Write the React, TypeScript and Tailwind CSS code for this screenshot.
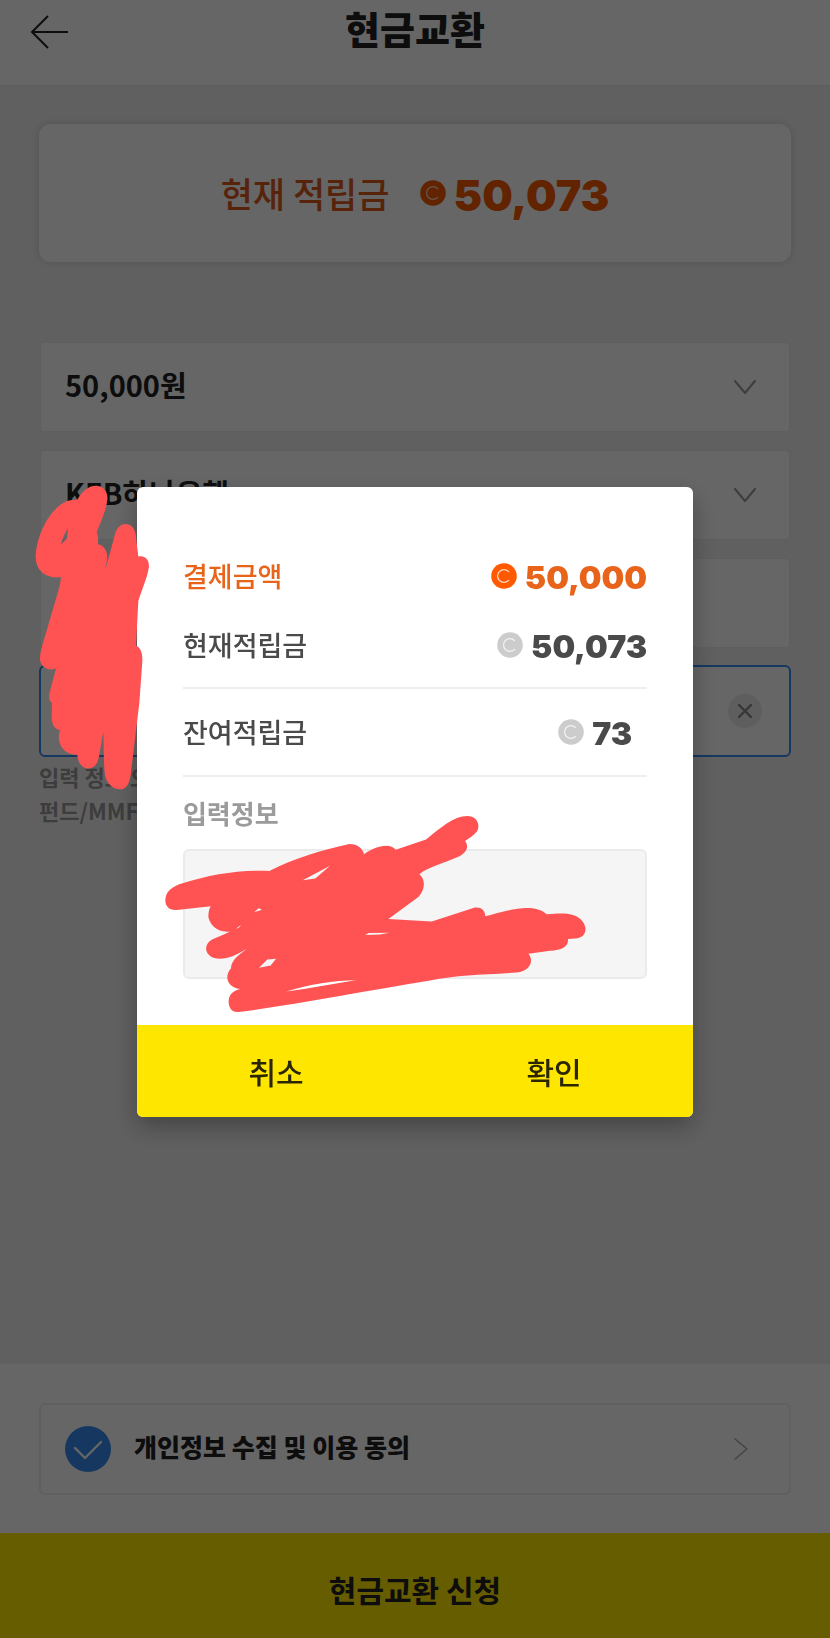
/**
 * Cash exchange screen (현금교환) with the confirm dialog open
 */

import React from 'react';

const AMOUNTS = ['50,000원', '30,000원', '10,000원'];
const BANKS = ['KEB하나은행', '국민은행', '신한은행'];

function Coin({ className }: { className: string }) {
  return (
    <svg viewBox="0 0 26 26" className={`w-[26px] h-[26px] shrink-0 ${className}`} aria-hidden="true">
      <circle cx="13" cy="13" r="12.8" fill="currentColor" />
      <path
        d="M17.6 8.6a6.4 6.4 0 1 0 0 8.8"
        fill="none"
        className="stroke-white"
        strokeOpacity="0.75"
        strokeWidth="1.3"
        strokeLinecap="round"
      />
    </svg>
  );
}

/** Marker strokes that hide the personal data */
function Redaction() {
  return (
    <svg
      viewBox="137 488 556 628"
      preserveAspectRatio="none"
      className="absolute inset-0 w-full h-full overflow-visible pointer-events-none fill-[#ff5252]"
      aria-hidden="true"
    >
      <g transform="translate(0 470) scale(0.33333)">
        <path
          fillRule="evenodd"
          d="M290 50C312 52 325 70 322 92C318 130 300 160 290 190C295 200 295 210 294 225C312 228 322 245 322 265L316 302L345 195C352 174 363 165 377 165C392 165 403 175 407 195L415 262C438 258 450 275 446 298C442 325 424 365 415 395L408 528C422 535 428 550 427 575L418 700L392 915C388 943 378 958 360 958C338 958 320 940 315 915C311 890 312 840 310 785L297 860C293 882 282 896 265 896C247 896 233 878 232 855C205 856 180 838 177 810C176 798 177 788 181 780C165 780 155 765 155 740L156 700C147 694 146 680 150 665L168 597C145 605 122 593 120 570C120 560 122 545 125 535L172 375C177 358 181 345 183 323C145 330 108 310 107 265C109 190 160 100 215 93L232 92C245 68 265 49 290 50ZM204 178C195 190 187 210 183 226C190 219 196 212 201 208Z"
        />
      </g>
      <g transform="translate(130 780) scale(0.33333)">
        <path
          fillRule="evenodd"
          d="M106 360C106 335 125 318 160 308C240 283 330 268 418 272C490 235 580 208 655 192C680 190 698 205 702 222C730 200 780 185 797 209L888 178C930 145 970 108 1012 108C1040 108 1053 135 1040 155C1030 168 1016 174 1005 183C1018 200 1010 217 985 230C940 250 895 260 868 282C885 295 888 325 865 350L775 416L905 423L1030 383C1050 378 1065 388 1066 408C1130 390 1210 366 1250 402C1300 397 1330 398 1350 415C1378 440 1368 475 1335 474L1314 476C1315 500 1295 508 1260 511L1195 520C1213 540 1200 572 1160 576C1060 583 980 583 900 600C700 632 500 672 325 694C298 697 290 665 300 645C306 634 316 629 330 625C300 622 288 600 293 582C295 573 299 568 303 564C303 540 325 525 350 505C310 530 280 540 250 532C222 520 222 492 245 478C265 468 285 462 300 453C265 458 240 435 235 410C235 395 238 385 242 378L140 389C118 391 106 378 106 360ZM518 300L600 257L556 295ZM372 396L386 384L396 388ZM318 445L334 432L326 442ZM387 562L412 537L438 535L422 555ZM705 464L716 458L778 457L750 462ZM468 633C540 610 610 600 680 598C610 610 540 622 468 633Z"
        />
      </g>
    </svg>
  );
}

function SelectField({ label, options }: { label: string; options: string[] }) {
  return (
    <div className="relative h-[92px] rounded-md border-2 border-[#eeeeee] bg-white">
      <select
        aria-label={label}
        className="w-full h-full appearance-none bg-transparent pl-6 pr-20 pb-1 text-[29px] font-bold text-[#222222] outline-none"
      >
        {options.map((o) => (
          <option key={o}>{o}</option>
        ))}
      </select>
      <svg
        viewBox="0 0 22 14"
        className="absolute right-[33px] top-[37px] w-[22px] h-[14px] fill-none stroke-[#999999] pointer-events-none"
        aria-hidden="true"
      >
        <path d="M1 1l10 12L21 1" strokeWidth="2" strokeLinecap="round" strokeLinejoin="round" />
      </svg>
    </div>
  );
}

interface AmountRowProps {
  label: string;
  value: string;
  rowClass?: string;
  coinClass?: string;
}

function AmountRow({ label, value, rowClass = 'text-[#4a4a4a]', coinClass = 'text-[#cccccc]' }: AmountRowProps) {
  return (
    <div className={`flex items-center justify-between ${rowClass}`}>
      <dt className="text-[27px] leading-10 font-medium">{label}</dt>
      <dd className="flex items-center gap-2">
        <Coin className={coinClass} />
        <span className="pt-1 font-[Inter,sans-serif] text-[32px] leading-10 font-black">{value}</span>
      </dd>
    </div>
  );
}

function ConfirmDialog() {
  return (
    <div className="fixed inset-0 flex items-center justify-center bg-black/60 pb-[34px]">
      <div role="dialog" aria-modal="true" aria-label="결제 확인" className="relative w-[67%] rounded-md bg-white shadow-[0_10px_24px_rgba(0,0,0,0.3)]">
        <div className="px-[46px] pt-[67px] pb-[46px]">
          <dl>
            <AmountRow label="결제금액" value="50,000" rowClass="text-[#e8641b]" coinClass="text-[#ff5a00]" />
            <div className="pt-[25px] pb-5 border-b-2 border-[#eeeeee]">
              <AmountRow label="현재적립금" value="50,073" />
            </div>
            <div className="pt-[21px] pb-[21px] pr-[15px] border-b-2 border-[#eeeeee]">
              <AmountRow label="잔여적립금" value="73" />
            </div>
          </dl>
          <p className="pt-4 text-[26px] leading-10 font-bold text-[#9b9b9b]">입력정보</p>
          <div className="mt-4 h-[130px] rounded-md border-2 border-[#ebebeb] bg-[#f5f5f5]" />
        </div>
        <div className="grid grid-cols-2 h-[92px] overflow-hidden rounded-b-md bg-[#ffe600] text-[30px] font-medium text-[#2a2600]">
          <button type="button">취소</button>
          <button type="button">확인</button>
        </div>
        <Redaction />
      </div>
    </div>
  );
}

export default function App() {
  return (
    <div className="min-h-screen flex flex-col bg-[#f0f0f0] font-['Noto_Sans_CJK_KR',sans-serif]">
      <header className="grid grid-cols-[1fr_auto_1fr] items-start bg-white px-[30px] h-[86px] border-b border-[#eaeaea]">
        <button type="button" aria-label="뒤로" className="w-[38px] pt-[14px]">
          <svg viewBox="0 0 38 36" className="w-[38px] h-[36px] fill-none stroke-[#222222]" aria-hidden="true">
            <path d="M18 2L2 18l16 16M2 18h36" strokeWidth="2" />
          </svg>
        </button>
        <h1 className="text-[38px] leading-[56px] font-black text-[#222222]">현금교환</h1>
      </header>

      <main className="flex-1 px-[39px] pt-[38px] pb-10">
        <section className="flex items-center justify-center h-[138px] rounded-xl bg-white shadow-[0_0_8px_rgba(0,0,0,0.14)]">
          <span className="text-[35px] font-medium text-[#d9591c]">현재 적립금</span>
          <Coin className="ml-[30px] mr-2 text-[#f55a00]" />
          <strong className="pt-1 font-[Inter,sans-serif] text-[43px] font-black text-[#f55a00]">50,073</strong>
        </section>

        <form className="mt-[79px] flex flex-col gap-4">
          <SelectField label="교환 금액" options={AMOUNTS} />
          <SelectField label="은행" options={BANKS} />
          <input
            aria-label="예금주"
            className="h-[92px] w-full rounded-md border-2 border-[#eeeeee] bg-white px-6 text-[30px] outline-none"
          />
          <div className="flex items-center h-[92px] rounded-md border-2 border-[#388cf0] bg-white pl-6 pr-[27px]">
            <input aria-label="계좌번호" className="flex-1 min-w-0 text-[30px] outline-none" />
            <button type="button" aria-label="지우기" className="flex items-center justify-center w-[34px] h-[34px] rounded-full bg-[#ebebeb]">
              <svg viewBox="0 0 16 16" className="w-4 h-4 fill-none stroke-[#888888]" aria-hidden="true">
                <path d="M2 2l12 12M14 2L2 14" strokeWidth="2.4" strokeLinecap="round" />
              </svg>
            </button>
          </div>
        </form>
        <p className="mt-[2px] text-[22px] leading-[34px] font-bold text-[#999999]">
          입력 정보 오
          <br />
          펀드/MMF
        </p>
      </main>

      <footer className="bg-white">
        <div className="px-[39px] pt-[39px] pb-[38px]">
          <div className="flex items-center h-[92px] rounded-md border-2 border-[#f0f0f0] pl-6 pr-[41px]">
            <label className="flex flex-1 items-center gap-[23px] text-[25px] font-black text-[#222222]">
              <span className="relative w-[46px] h-[46px] shrink-0">
                <input type="checkbox" defaultChecked className="block w-full h-full appearance-none rounded-full bg-[#388cf0]" />
                <svg
                  viewBox="0 0 46 46"
                  className="absolute inset-0 w-full h-full fill-none stroke-white pointer-events-none"
                  aria-hidden="true"
                >
                  <path d="M10 22l10 10 16-16" strokeWidth="2.4" strokeLinecap="round" strokeLinejoin="round" />
                </svg>
              </span>
              <span className="pb-1">개인정보 수집 및 이용 동의</span>
            </label>
            <button type="button" aria-label="약관 보기">
              <svg viewBox="0 0 14 22" className="w-[14px] h-[22px] fill-none stroke-[#aaaaaa]" aria-hidden="true">
                <path d="M1 1l12 10L1 21" strokeWidth="1.6" strokeLinecap="round" strokeLinejoin="round" />
              </svg>
            </button>
          </div>
        </div>
        <button type="button" className="w-full h-[105px] pt-2 bg-[#ffe600] text-[30px] font-bold text-[#222222]">
          현금교환 신청
        </button>
      </footer>

      <ConfirmDialog />
    </div>
  );
}
